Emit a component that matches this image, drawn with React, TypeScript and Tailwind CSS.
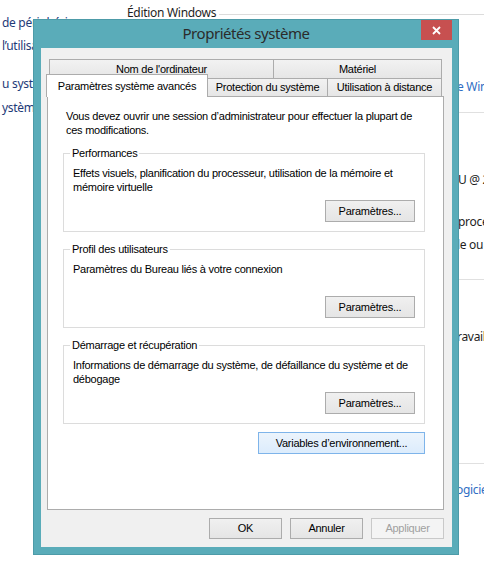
import React from "react";

const dlgFont = "font-['Liberation_Sans',Arial,sans-serif] text-[11px] tracking-[-0.25px] text-black";

const Button = ({
  children,
  className = "",
  disabled = false,
  hot = false,
}: {
  children: React.ReactNode;
  className?: string;
  disabled?: boolean;
  hot?: boolean;
}) => {
  let look = "border-[#acacac] bg-gradient-to-b from-[#f0f0f0] to-[#e5e5e5] text-black";
  if (hot) look = "border-[#7eb4ea] bg-gradient-to-b from-[#ecf4fc] to-[#dcecfc] text-black";
  if (disabled) look = "border-[#c9c9c9] bg-[#f4f4f4] text-[#a0a0a0]";
  return (
    <div className={`flex items-center justify-center border ${look} ${className}`}>{children}</div>
  );
};

const GroupBox = ({
  title,
  lines,
  className = "",
}: {
  title: string;
  lines: string[];
  className?: string;
}) => {
  return (
    <div className={`flex h-[79px] w-[362px] flex-col border border-[#dcdcdc] px-[9px] ${className}`}>
      <span className="-ml-[3px] -mt-[8px] self-start bg-white px-[2px] leading-[14px]">{title}</span>
      <p className="mt-[6px] leading-[14px]">
        {lines.map((l, i) => (
          <React.Fragment key={i}>
            {i > 0 && <br />}
            {l}
          </React.Fragment>
        ))}
      </p>
      <Button className="mb-[9px] mt-auto h-[22px] w-[90px] self-end">Paramètres...</Button>
    </div>
  );
};

const TabStrip = () => {
  const tab = "flex items-center justify-center border-t border-[#acacac] bg-gradient-to-b from-[#f2f2f2] to-[#e6e6e6] whitespace-nowrap";
  return (
    <div className="ml-[6px] w-[397px]">
      <div className="ml-[2px] flex h-[19px]">
        <div className={`${tab} w-[224px] border-l`}>Nom de l'ordinateur</div>
        <div className={`${tab} w-[169px] border-x`}>Matériel</div>
      </div>
      <div className="flex h-[18px] items-end">
        <div className="relative z-10 -mb-px -ml-px -mr-px flex h-[23px] w-[162px] items-center justify-center whitespace-nowrap border-x border-t border-[#acacac] bg-white">
          Paramètres système avancés
        </div>
        <div className={`${tab} h-[18px] w-[120px] border-l`}>Protection du système</div>
        <div className={`${tab} h-[18px] w-[115px] border-x`}>Utilisation à distance</div>
      </div>
      <div className="flex h-[414px] flex-col border border-[#acacac] bg-white pl-[15px] pt-[12px]">
        <p className="ml-[3px] leading-[14px]">
          Vous devez ouvrir une session d’administrateur pour effectuer la plupart de
          <br />
          ces modifications.
        </p>
        <GroupBox
          className="mt-[16px]"
          title="Performances"
          lines={[
            "Effets visuels, planification du processeur, utilisation de la mémoire et",
            "mémoire virtuelle",
          ]}
        />
        <GroupBox
          className="mt-[17px]"
          title="Profil des utilisateurs"
          lines={["Paramètres du Bureau liés à votre connexion"]}
        />
        <GroupBox
          className="mt-[17px]"
          title="Démarrage et récupération"
          lines={[
            "Informations de démarrage du système, de défaillance du système et de",
            "débogage",
          ]}
        />
        <Button hot className="ml-[195px] mt-[8px] h-[22px] w-[167px]">
          Variables d’environnement...
        </Button>
      </div>
    </div>
  );
};

const SystemDialog = () => {
  return (
    <div className="absolute left-[33px] top-[19px] flex h-[536px] w-[426px] flex-col border border-[#4d9ba8] bg-[#5aacb9]">
      <div className="grid h-[28px] grid-cols-[37px_1fr_37px]">
        <div />
        <div className="flex items-center justify-center pb-[1px] font-['Segoe_UI','Noto_Sans',sans-serif] text-[15px] tracking-[-0.45px] text-[#2b2b2b]">
          Propriétés système
        </div>
        <div className="flex h-[20px] w-[31px] items-center justify-center bg-[#c75050]">
          <svg width="9" height="9" viewBox="0 0 9 9">
            <path d="M1 1 L8 8 M8 1 L1 8" stroke="white" strokeWidth="1.8" />
          </svg>
        </div>
      </div>
      <div className={`mb-[7px] ml-[7px] mr-[6px] flex flex-1 flex-col bg-[#f0f0f0] pt-[11px] ${dlgFont}`}>
        <TabStrip />
        <div className="mr-[8px] mt-[8px] flex justify-end gap-[8px]">
          <Button className="h-[21px] w-[73px]">OK</Button>
          <Button className="h-[21px] w-[73px]">Annuler</Button>
          <Button disabled className="h-[21px] w-[73px]">
            Appliquer
          </Button>
        </div>
      </div>
    </div>
  );
};

const App = () => {
  return (
    <div className="relative h-[574px] w-[484px] overflow-hidden bg-white font-['Segoe_UI','Noto_Sans',sans-serif] text-[12px] leading-[17px] tracking-[-0.3px]">
      <div className="flex">
        <div className="w-[127px] shrink-0 whitespace-nowrap pl-[2px] text-[#1e3a78]">
          <div className="mt-[14px]">de périphériques</div>
          <div className="mt-[6px]">l’utilisation à distance</div>
          <div className="mt-[21px]">u système</div>
          <div className="mt-[7px]">ystème avancés</div>
        </div>
        <div className="min-w-0 flex-1 whitespace-nowrap">
          <div className="mt-[4px] flex h-[17px] items-center">
            <span className="text-[#1e1e1e]">Édition Windows</span>
            <div className="ml-[3px] mt-[4px] h-px flex-1 bg-[#dcdcdc]" />
          </div>
          <div className="mt-[57px] pl-[330px] text-[#2f6ec4]">e Windows</div>
          <div className="mt-[17px] h-px bg-[#e0e0e0]" />
          <div className="mt-[58px] pl-[331px] text-[#1e1e1e]">U @ 2.40GHz</div>
          <div className="mt-[25px] pl-[331px] text-[#1e1e1e]">processeur x64</div>
          <div className="mt-[6px] pl-[330px] text-[#1e1e1e]">le ou avec un stylet</div>
          <div className="mt-[26px] h-px bg-[#e0e0e0]" />
          <div className="mt-[48px] pl-[330px] text-[#1e1e1e]">ravail</div>
          <div className="mt-[118px] h-px bg-[#e0e0e0]" />
          <div className="mt-[17px] pl-[329px] text-[#2f6ec4]">ogiciel Microsoft</div>
        </div>
      </div>
      <SystemDialog />
    </div>
  );
};

export default App;
